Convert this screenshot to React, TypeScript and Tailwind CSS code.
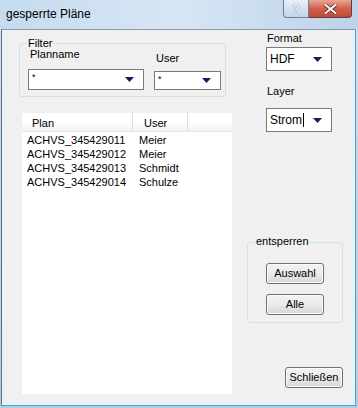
import React from 'react';

const font = { fontFamily: '"Liberation Sans", Arial, sans-serif' };

const Arrow: React.FC = () => (
    <svg width="9" height="5" viewBox="0 0 9 5" className="shrink-0">
        <path d="M0 0 H9 L4.5 5 Z" fill="#1a1a5e" />
    </svg>
);

interface ComboProps {
    value: string;
    width: string;
    height: string;
    big?: boolean;
    caret?: boolean;
}

const Combo: React.FC<ComboProps> = ({ value, width, height, big, caret }) => (
    <div className={`${width} ${height} bg-white border border-[#7a7a7a] flex items-center pl-[3px] pr-[9px] justify-between`}>
        {big ? (
            <span className="text-[12px] leading-[14px] text-black flex items-center">
                {value}
                {caret && <span className="w-px h-[14px] bg-black ml-[1px]" />}
            </span>
        ) : (
            <span className="text-[9px] leading-[9px] text-black self-start mt-[3px]">{value}</span>
        )}
        <Arrow />
    </div>
);

const Button: React.FC<{ label: string; className?: string }> = ({ label, className }) => (
    <button className={`h-[21px] w-[58px] rounded-[3px] border border-[#707070] bg-gradient-to-b from-[#f3f3f3] via-[#ebebeb] to-[#d6d6d6] text-[11px] leading-[13px] text-black shadow-[inset_0_0_0_1px_#fcfcfc] ${className ?? ''}`}>
        {label}
    </button>
);

const rows = [
    { plan: 'ACHVS_345429011', user: 'Meier' },
    { plan: 'ACHVS_345429012', user: 'Meier' },
    { plan: 'ACHVS_345429013', user: 'Schmidt' },
    { plan: 'ACHVS_345429014', user: 'Schulze' },
];

export default function App() {
    return (
        <div style={font} className="w-[358px] h-[408px] flex flex-col bg-gradient-to-b from-[#d3e3f3] via-[#bfd5eb] to-[#b3cce6] overflow-hidden">
            {/* title bar */}
            <div className="h-[29px] flex items-start relative shrink-0 bg-gradient-to-r from-[#c6dbef] via-[#d7e6f4] to-[#bcd3ea]">
                <span className="ml-[6px] mt-[7px] text-[12px] leading-[15px] text-black">gesperrte Pläne</span>
                <div className="absolute right-[6px] top-0 flex">
                    <div className="w-[26px] h-[18px] rounded-bl-[4px] border border-t-0 border-[#6d7f95] bg-gradient-to-b from-[#e9f0f8] to-[#c2d4e8] flex items-center justify-center text-[12px] leading-[12px] font-bold text-[#f8fbff] [text-shadow:0_0_1px_#334]">
                        ?
                    </div>
                    <div className="w-[43px] h-[18px] rounded-br-[4px] border border-t-0 border-l-0 border-[#6a3a3a] bg-gradient-to-b from-[#e6a595] via-[#d0604c] to-[#c24a36] flex items-center justify-center">
                        <svg width="13" height="10" viewBox="0 0 13 10">
                            <path d="M1 0.5 L12 9.5 M12 0.5 L1 9.5" stroke="#5b2a22" strokeWidth="3.4" />
                            <path d="M1 0.5 L12 9.5 M12 0.5 L1 9.5" stroke="#ffffff" strokeWidth="2" />
                        </svg>
                    </div>
                </div>
            </div>

            {/* client area */}
            <div className="ml-[1px] mr-[2px] mb-[2px] h-[377px] border-l border-[#5f6f80] border-b border-b-[#3ea6d6] border-r border-r-[#3ea6d6] bg-[#f0f0f0] border-t border-t-[#8a99a8] flex text-[11px] leading-[13px] text-black">
                {/* left column */}
                <div className="pl-[17px] pt-[13px] flex flex-col">
                    <div className="relative w-[207px] h-[54px] border border-[#d5dfe5] rounded-[3px] flex pl-[8px]">
                        <span className="absolute left-[7px] top-[-7px] bg-[#f0f0f0] px-[1px]">Filter</span>
                        <div className="flex flex-col pt-[4px]">
                            <span className="ml-[2px]">Planname</span>
                            <div className="mt-[8px]">
                                <Combo value="*" width="w-[116px]" height="h-[21px]" />
                            </div>
                        </div>
                        <div className="flex flex-col pt-[8px] ml-[10px]">
                            <span className="ml-[2px]">User</span>
                            <div className="mt-[6px]">
                                <Combo value="*" width="w-[67px]" height="h-[19px]" />
                            </div>
                        </div>
                    </div>

                    <div className="mt-[16px] ml-[3px] w-[210px] h-[281px] bg-white flex flex-col">
                        <div className="h-[19px] flex bg-gradient-to-b from-white from-40% to-[#f1f2f4] border-b border-[#e5e5e5]">
                            <div className="w-[111px] pl-[10px] pt-[4px] border-r border-[#dcdcdc]">Plan</div>
                            <div className="w-[55px] pl-[11px] pt-[4px] border-r border-[#dcdcdc]">User</div>
                            <div className="flex-1" />
                        </div>
                        <div className="pt-[1px]">
                            {rows.map((r) => (
                                <div key={r.plan} className="h-[14px] flex items-center">
                                    <span className="w-[117px] pl-[5px]">{r.plan}</span>
                                    <span>{r.user}</span>
                                </div>
                            ))}
                        </div>
                    </div>
                </div>

                {/* right column */}
                <div className="ml-[15px] flex flex-col">
                    <div className="ml-[19px] flex flex-col">
                        <span className="mt-[2px] ml-[1px]">Format</span>
                        <div className="mt-[2px]">
                            <Combo value="HDF" width="w-[66px]" height="h-[24px]" big />
                        </div>
                        <span className="mt-[14px] ml-[1px]">Layer</span>
                        <div className="mt-[10px]">
                            <Combo value="Strom" width="w-[66px]" height="h-[24px]" big caret />
                        </div>
                    </div>

                    <div className="relative mt-[110px] w-[96px] h-[81px] border border-[#d5dfe5] rounded-[3px] flex flex-col pl-[18px] pt-[20px]">
                        <span className="absolute left-[7px] top-[-8px] bg-[#f0f0f0] px-[1px]">entsperren</span>
                        <Button label="Auswahl" />
                        <Button label="Alle" className="mt-[10px] h-[20px]" />
                    </div>

                    <div className="mt-[44px] flex justify-end">
                        <Button label="Schließen" />
                    </div>
                </div>
            </div>
        </div>
    );
}
